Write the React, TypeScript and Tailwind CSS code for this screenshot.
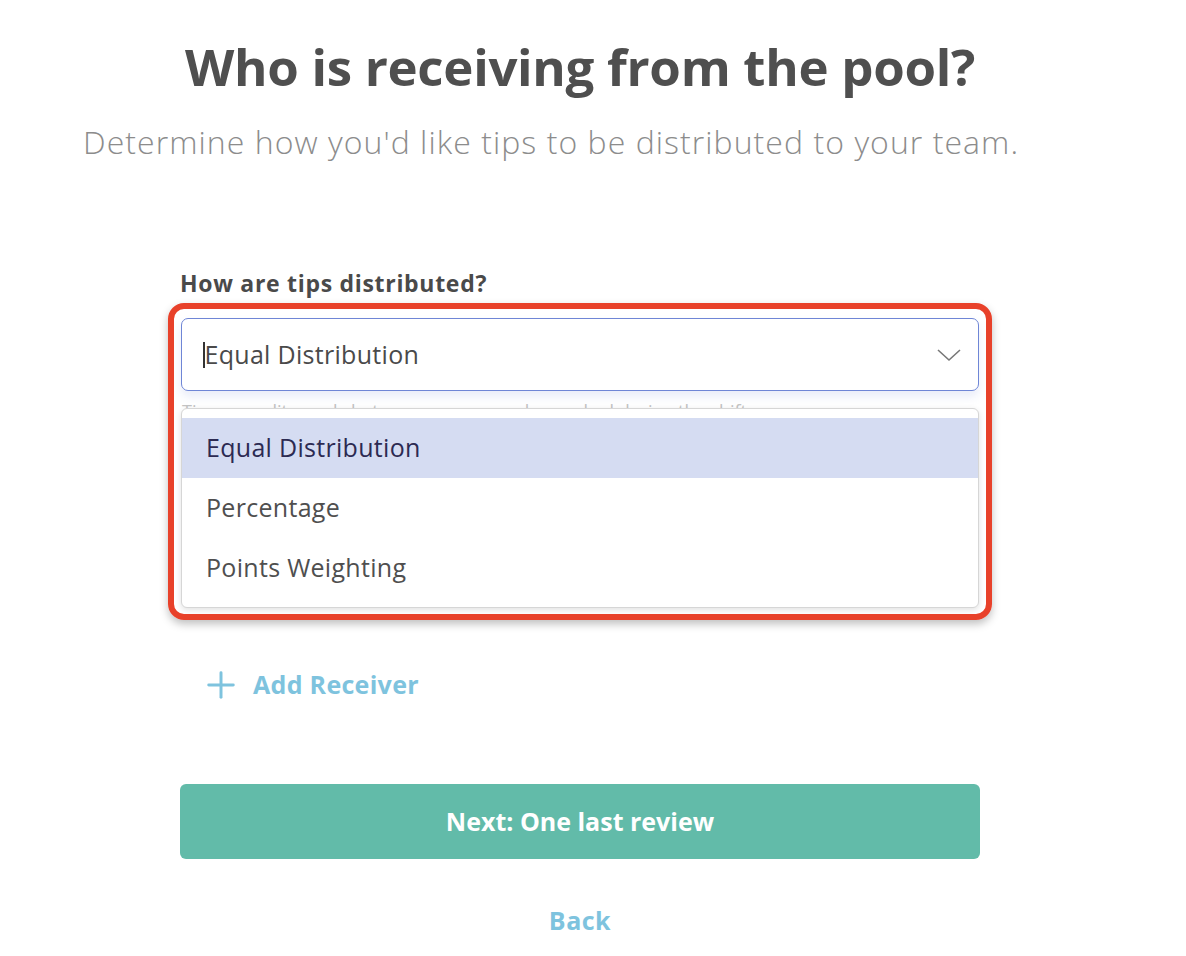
import { Plus } from 'lucide-react';

const options = ['Equal Distribution', 'Percentage', 'Points Weighting'];

export default function App() {
    return (
        <div className="w-[1160px] bg-white pt-[34px] pb-[20px] font-['Open_Sans',sans-serif]">
            {/* Header */}
            <h1 className="text-center text-[51px] font-bold leading-[64px] text-[#4f4f4f] tracking-[-0.3px]">
                Who is receiving from the pool?
            </h1>
            <p className="mt-[22px] pl-[83px] text-[32px] font-light leading-[44px] tracking-[1.05px] text-[#8c8c8c]">
                Determine how you'd like tips to be distributed to your team.
            </p>

            <div className="ml-[180px] w-[800px] mt-[104px]">
                <label className="block text-[23px] font-bold leading-[30px] tracking-[0.7px] text-[#4a4a4a]">
                    How are tips distributed?
                </label>

                <div className="relative mt-[20px]">
                    {/* Select */}
                    <div className="relative z-10 ml-[1px] flex h-[73px] w-[798px] items-center justify-between rounded-[7px] border-[1.5px] border-[#6f86d6] bg-white pl-[21px] pr-[16px] shadow-[0_6px_10px_rgba(111,134,214,0.15)]">
                        <div className="flex items-center">
                            <span className="h-[26px] w-[1.5px] bg-[#333]" />
                            <span className="text-[25px] leading-none tracking-[0.3px] text-[#4a4a4a]">Equal Distribution</span>
                        </div>
                        <svg width="26" height="16" viewBox="0 0 26 16" fill="none" stroke="#777" strokeWidth="1.6">
                            <path d="M2 3l11 10L24 3" />
                        </svg>
                    </div>

                    <p className="mt-[8px] pl-[2px] text-[18px] leading-[24px] text-[#c4c4c4]">
                        Tips are split evenly between everyone who worked during the shift.
                    </p>

                    {/* Dropdown menu */}
                    <div className="absolute left-[1px] top-[90px] z-20 w-[798px] rounded-[6px] border border-[#d6d6d6] bg-white py-[9px] shadow-[0_2px_6px_rgba(0,0,0,0.12)]">
                        {options.map((opt, i) => (
                            <div
                                key={opt}
                                className={
                                    i === 0
                                        ? 'flex h-[60px] items-center bg-[#d5dcf2] pl-[24px] text-[25px] tracking-[0.3px] text-[#2c2a52]'
                                        : 'flex h-[60px] items-center pl-[24px] text-[25px] tracking-[0.3px] text-[#4f4f4f]'
                                }
                            >
                                {opt}
                            </div>
                        ))}
                    </div>

                    {/* Highlight annotation */}
                    <div className="pointer-events-none absolute -left-[12px] -top-[15px] z-30 h-[317px] w-[824px] rounded-[16px] border-[6px] border-[#e8412a] shadow-[0_4px_8px_rgba(0,0,0,0.25)]" />
                </div>

                {/* Hidden receivers list area */}
                <div className="h-[241px]" />

                <button className="ml-[20px] flex items-center gap-[11px] text-[#7ec3de]">
                    <Plus size={42} strokeWidth={1.7} />
                    <span className="text-[25px] font-bold tracking-[0.3px]">Add Receiver</span>
                </button>

                <button className="mt-[78px] flex h-[75px] w-[800px] items-center justify-center rounded-[6px] bg-[#62bba9] text-[25px] font-bold text-white">
                    Next: One last review
                </button>

                <div className="mt-[43px] text-center text-[25px] font-bold tracking-[0.5px] text-[#7ec3de]">Back</div>
            </div>
        </div>
    );
}
